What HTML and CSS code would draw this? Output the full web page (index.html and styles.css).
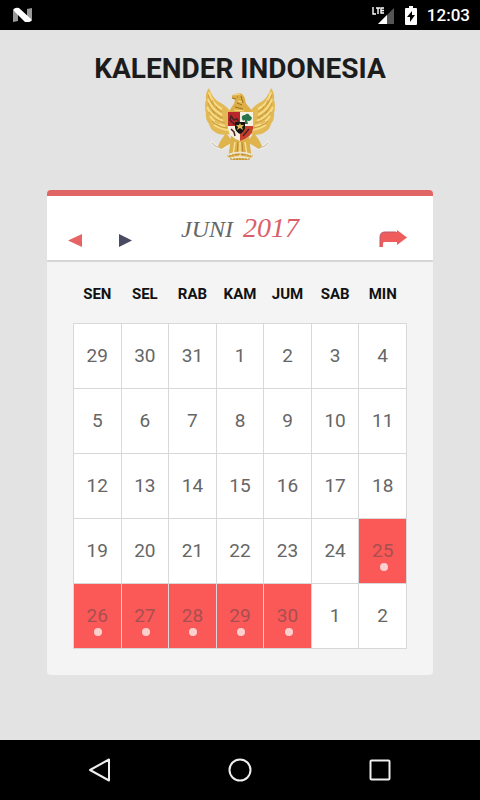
FILE: index.html
```html
<!DOCTYPE html>
<html lang="id">
<head>
    <meta charset="UTF-8">
    <meta name="viewport" content="width=device-width, initial-scale=1">
    <title>Kalender Indonesia</title>
    <link rel="stylesheet" href="styles.css">
</head>
<body>

<div class="status-bar">
    <svg class="logo" width="20" height="16" viewBox="0 0 20 16">
        <path d="M0 2l5-1v13l-5 1zM14 2l5-1v13l-5 1z" fill="#999"/>
        <path d="M1 2q2-2 5-1l12 11q1 2-2 3h-4L1 4z" fill="#fff"/>
    </svg>
    <div class="status-icons">
        <svg width="24" height="20" viewBox="0 0 24 20">
            <path d="M23 3v16H7z" fill="#555"/>
            <path d="M16 10v9H7z" fill="#fff"/>
            <path d="M2 2v7h3M5 3h4M7 3v6M13 3h-3v5h3M10 5.500h3" fill="none" stroke="#fff" stroke-width="1.400"/>
        </svg>
        <svg width="12" height="19" viewBox="0 0 12 19">
            <path d="M1 2h3V0h4v2h3q1 0 1 1v15q0 1-1 1H1q-1 0-1-1V3q0-1 1-1z" fill="#fff"/>
            <path d="M7 5l-5 6h3v5l5-7H7z" fill="#000"/>
        </svg>
        <span class="clock">12:03</span>
    </div>
</div>

<main>
    <h1>KALENDER INDONESIA</h1>

    <svg class="emblem" width="76" height="82" viewBox="2 0 76 82">
        <!-- wings -->
        <g id="wing">
            <path d="M9 6q4 12 12 15 7 4 12 12l-3 19q-10 2-15-2-5-3-6-8-4-5-3-11-2-7 0-13-1-7 3-12z" fill="#e3b955"/>
            <path d="M9 10q3 12 13 17M8 17q3 10 14 16M7 25q4 9 16 14M10 34q5 8 15 10M14 43q6 4 14 5" fill="none" stroke="#f6dc86" stroke-width="2"/>
            <path d="M8 13q4 11 14 17M8 21q4 10 15 15M9 30q5 8 16 11M12 39q6 6 15 7" fill="none" stroke="#c48f30" stroke-width=".7"/>
            <path d="M12 18l2 5M16 24l2 4M12 28l3 4M18 33l3 4M15 39l4 3" stroke="#c48f30" stroke-width=".7"/>
        </g>
        <use href="#wing" transform="matrix(-1 0 0 1 80 0)"/>
        <!-- head and neck -->
        <path d="M32 16q-1-3 3-4 8-3 10 5 0 4 3 7 4 3 3 8H29q1-6 5-10l1-4z" fill="#dcae45"/>
        <path d="M32 16l4 1M37 15h1M37 21l5 2M35 25l8 2M41 14l2 7" stroke="#9f721e" stroke-width="1"/>
        <path d="M34 13l6-1M38 19l4 1M34 28l10 1" stroke="#f8df91" stroke-width="1"/>
        <!-- ribbon -->
        <path d="M12 57q5 8 13 6 14-4 30 0 8 2 13-6l2 3q-3 9-12 8-18-3-36 0-9 0-12-8z" fill="#e9e8e2"/>
        <path d="M12 61q5 6 12 4M68 61q-5 6-12 4" fill="none" stroke="#b9b5a7" stroke-width=".8"/>
        <!-- legs and tail -->
        <path d="M26 51l-5 7-3 6 3 3 5-3 7-4M54 51l5 7 3 6-3 3-5-3-7-4" fill="#dfb44c"/>
        <path d="M31 54h18l2 17 2 3-5 4H32l-5-4 2-3z" fill="#dcb04a"/>
        <path d="M35 60l-2 13M40 60v14M45 60l2 13" stroke="#f8e29c" stroke-width="1.400"/>
        <path d="M38 60l-1 13M42 60l1 13" stroke="#ac7b22" stroke-width=".7"/>
        <path d="M28 73q12-5 24 0M29 77q11-4 22 0" fill="none" stroke="#eee6cf" stroke-width="2"/>
        <path d="M29 74q11-4 22 0M30 77h20" fill="none" stroke="#a4782c" stroke-width=".8" stroke-dasharray="2 1"/>
        <!-- shield -->
        <path d="M28 30h25v17q-1 8-13 12-11-4-12-12z" fill="#f5f0df"/>
        <path d="M28 30h12v14H28z" fill="#b9272b"/>
        <path d="M40 44h13v3q-1 8-13 12z" fill="#c7402c"/>
        <path d="M42 37q-1-4 3-4 3-3 5 1 3 1 1 4-3 2-4 0l1 4h-3v-4q-2 2-3-1z" fill="#28734b"/>
        <path d="M31 34l3 4 3-1 2 4-5 1-4-4zM31 47l3 3 1 4M43 54l6-7" fill="none" stroke="#4a2424" stroke-width="1.500"/>
        <path d="M35 40h10v6q-1 4-5 6-4-2-5-6z" fill="#171412"/>
        <path d="M40 41l1 2h3l-2 2 1 3-3-2-3 2 1-3-2-2h3z" fill="#e0bd54"/>
    </svg>

    <section class="calendar">
        <header class="calendar-header">
            <div class="pager">
                <button type="button" aria-label="Bulan sebelumnya">
                    <svg width="14" height="13" viewBox="0 0 14 13"><path d="M0 6.500L14 0v13z" fill="#e66464"/></svg>
                </button>
                <button type="button" aria-label="Bulan berikutnya">
                    <svg width="14" height="13" viewBox="0 0 14 13"><path d="M14 6.500L1 0v13z" fill="#4b4a63"/></svg>
                </button>
            </div>
            <h2>JUNI <span class="year">2017</span></h2>
            <button type="button" class="share" aria-label="Bagikan">
                <svg width="28" height="17" viewBox="0 0 28 17">
                    <path d="M1 17V7q0-5 5-5h12V0l10 7.500L18 15v-3H5q-1 0-1 2v3z" fill="#ee5c5c"/>
                    <path d="M1 17V7q0-5 5-5h11" fill="none" stroke="#b85a70"/>
                </svg>
            </button>
        </header>

        <table>
            <thead>
                <tr>
                    <th>SEN</th>
                    <th>SEL</th>
                    <th>RAB</th>
                    <th>KAM</th>
                    <th>JUM</th>
                    <th>SAB</th>
                    <th>MIN</th>
                </tr>
            </thead>
            <tbody>
                <tr><td>29</td><td>30</td><td>31</td><td>1</td><td>2</td><td>3</td><td>4</td></tr>
                <tr><td>5</td><td>6</td><td>7</td><td>8</td><td>9</td><td>10</td><td>11</td></tr>
                <tr><td>12</td><td>13</td><td>14</td><td>15</td><td>16</td><td>17</td><td>18</td></tr>
                <tr><td>19</td><td>20</td><td>21</td><td>22</td><td>23</td><td>24</td><td class="event">25</td></tr>
                <tr>
                    <td class="event">26</td>
                    <td class="event">27</td>
                    <td class="event">28</td>
                    <td class="event">29</td>
                    <td class="event">30</td>
                    <td>1</td>
                    <td>2</td>
                </tr>
            </tbody>
        </table>
    </section>
</main>

<nav class="nav-bar">
    <button type="button" aria-label="Kembali">
        <svg width="24" height="24" viewBox="0 0 24 24"><path d="M21 1.500v21L2 12z"/></svg>
    </button>
    <button type="button" aria-label="Beranda">
        <svg width="24" height="24" viewBox="0 0 24 24"><circle cx="12" cy="12" r="10.500"/></svg>
    </button>
    <button type="button" aria-label="Aplikasi terbaru">
        <svg width="24" height="24" viewBox="0 0 24 24"><rect x="2.500" y="2.500" width="19" height="19" rx="1"/></svg>
    </button>
</nav>

</body>
</html>
```

FILE: styles.css
```css
* {
    box-sizing: border-box;
}
body {
    display: flex;
    flex-direction: column;
    min-height: 100vh;
    margin: 0;
    font-family: Roboto, Arial, sans-serif;
    background-color: #e3e3e3;
    color: #1c1c1c;
}
button {
    display: flex;
    padding: 0;
    border: 0;
    background: none;
    cursor: pointer;
}
svg {
    display: block;
}

/* system bars */
.status-bar {
    display: flex;
    justify-content: space-between;
    align-items: center;
    height: 30px;
    padding: 0 10px 0 13px;
    background-color: #000;
    color: #fff;
}
.status-icons {
    display: flex;
    align-items: center;
    gap: 10px;
}
.clock {
    font-size: 17px;
    font-weight: 500;
    line-height: 30px;
}
.nav-bar {
    display: flex;
    justify-content: center;
    align-items: center;
    gap: 116px;
    height: 60px;
    background-color: #000;
}
.nav-bar svg {
    fill: none;
    stroke: #eee;
    stroke-width: 2;
    stroke-linejoin: round;
}

main {
    flex: 1;
    padding: 25px 47px 60px;
}
h1 {
    margin: 0;
    font-size: 28px;
    font-weight: 700;
    line-height: 27px;
    text-align: center;
}
.emblem {
    margin: 0 auto 26px;
}

/* calendar card */
.calendar {
    padding-bottom: 26px;
    border-top: 6px solid #e06666;
    border-radius: 4px;
    background-color: #f4f4f4;
}
.calendar-header {
    display: grid;
    grid-template-columns: 1fr auto 1fr;
    align-items: end;
    padding: 17px 26px 13px 21px;
    border-bottom: 2px solid #d6d6d6;
    background-color: #fff;
}
.pager {
    display: flex;
    gap: 36px;
}
h2 {
    margin: 0;
    padding: 0 0 3px 5px;
    font-family: "Liberation Serif", serif;
    font-size: 24px;
    font-style: italic;
    font-weight: 400;
    line-height: 30px;
    color: #666;
}
.year {
    margin-left: 4px;
    font-size: 28px;
    color: #d8606a;
}
.share {
    justify-self: end;
}

table {
    width: calc(100% - 52px);
    margin: 0 auto;
    border-collapse: collapse;
    table-layout: fixed;
}
th {
    height: 61px;
    padding: 4px 0 0;
    font-size: 15px;
    font-weight: 700;
    color: #111;
}
td {
    position: relative;
    height: 65px;
    padding: 0;
    border: 1px solid #d8d8d8;
    background-color: #fff;
    font-size: 19px;
    text-align: center;
    color: #666;
}
.event {
    background-color: #fb5858;
    color: #a84f50;
}
.event::after {
    content: "";
    position: absolute;
    bottom: 12px;
    left: calc(50% - 3px);
    width: 8px;
    height: 8px;
    border-radius: 50%;
    background-color: #fdd0d0;
}
```
